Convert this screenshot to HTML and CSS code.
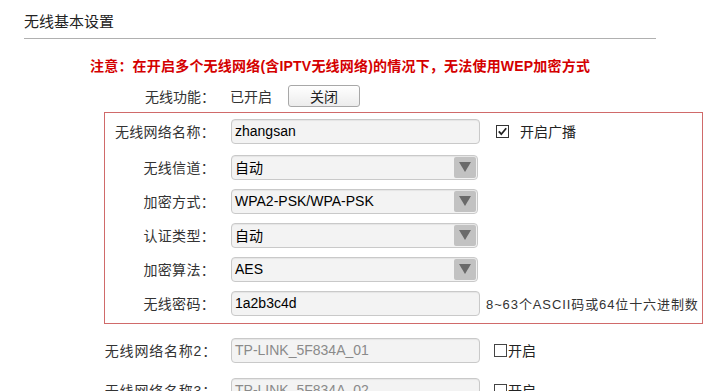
FILE: index.html
```html
<!DOCTYPE html>
<html lang="zh-CN">
<head>
  <meta charset="UTF-8">
  <title>无线基本设置</title>
  <link rel="stylesheet" href="styles.css">
</head>
<body>
  <div class="title">无线基本设置</div>

  <div class="notice">注意：在开启多个无线网络(含IPTV无线网络)的情况下，无法使用WEP加密方式</div>

  <div class="row row-switch">
    <span class="label">无线功能：</span>
    <span class="state">已开启</span>
    <button class="btn">关闭</button>
  </div>

  <div class="box">
    <div class="row first">
      <span class="label">无线网络名称：</span>
      <div class="field">zhangsan</div>
      <span class="check">
        <svg width="13" height="13" viewBox="0 0 13 13">
          <rect x="0.5" y="0.5" width="12" height="12" fill="#fff" stroke="#333"/>
          <path d="M2.8 6.4 L5.3 9.2 L10.2 3.2" fill="none" stroke="#222" stroke-width="1.8"/>
        </svg>
        开启广播
      </span>
    </div>
    <div class="row">
      <span class="label">无线信道：</span>
      <div class="field select"><span>自动</span><span class="arrow"></span></div>
    </div>
    <div class="row">
      <span class="label">加密方式：</span>
      <div class="field select"><span>WPA2-PSK/WPA-PSK</span><span class="arrow"></span></div>
    </div>
    <div class="row">
      <span class="label">认证类型：</span>
      <div class="field select"><span>自动</span><span class="arrow"></span></div>
    </div>
    <div class="row">
      <span class="label">加密算法：</span>
      <div class="field select"><span>AES</span><span class="arrow"></span></div>
    </div>
    <div class="row">
      <span class="label">无线密码：</span>
      <div class="field">1a2b3c4d</div>
      <span class="hint">8~63个ASCII码或64位十六进制数</span>
    </div>
  </div>

  <div class="row row-out">
    <span class="label">无线网络名称2：</span>
    <div class="field disabled">TP-LINK_5F834A_01</div>
    <span class="plain-check"><span class="box-mark"></span>开启</span>
  </div>
  <div class="row row-out">
    <span class="label">无线网络名称3：</span>
    <div class="field disabled">TP-LINK_5F834A_02</div>
    <span class="plain-check"><span class="box-mark"></span>开启</span>
  </div>
</body>
</html>
```

FILE: styles.css
```css
body {
  margin: 0;
  background-color: #fff;
  font-family: "Liberation Sans", "Noto Sans CJK SC", sans-serif;
  font-size: 14px;
  color: #333;
}

.title {
  margin-left: 24px;
  width: 632px;
  padding-top: 12px;
  padding-bottom: 6px;
  line-height: 20px;
  font-size: 15px;
  color: #222;
  border-bottom: 1px solid #b0b0b0;
}

.notice {
  margin-top: 17px;
  margin-left: 90px;
  line-height: 20px;
  font-weight: bold;
  letter-spacing: 0.2px;
  color: #d40000;
}

.row {
  display: flex;
  align-items: center;
  height: 34px;
}

.label {
  width: 112px;
  text-align: right;
  flex-shrink: 0;
}

.row-switch {
  height: 30px;
  margin-top: 5px;
  margin-left: 103px;
}

.state {
  margin-left: 15px;
}

.btn {
  margin-left: 16px;
  width: 72px;
  height: 22px;
  padding: 0;
  font-family: inherit;
  font-size: 14px;
  color: #222;
  background: linear-gradient(#fff, #ececec);
  border: 1px solid #a8a8a8;
  border-radius: 3px;
}

.box {
  margin-top: 1px;
  margin-left: 104px;
  width: 597px;
  padding: 1px 0 3px;
  border: 1px solid #d06a6a;
}

.box .label {
  width: 110px;
  letter-spacing: 0.3px;
}

.box .row.first {
  margin-bottom: 2px;
}

.field {
  margin-left: 16px;
  width: 241px;
  height: 23px;
  padding-left: 3px;
  padding-right: 3px;
  display: flex;
  align-items: center;
  justify-content: space-between;
  background-color: #f3f3f3;
  border: 1px solid #c9c9c9;
  border-radius: 4px;
  box-shadow: inset 0 1px 1px rgba(0,0,0,0.06);
  color: #000;
  flex-shrink: 0;
}

.select {
  padding-right: 1px;
}

.arrow {
  width: 22px;
  height: 21px;
  background-color: #c2c2c2;
  border-radius: 2px;
  display: flex;
  align-items: center;
  justify-content: center;
}

.arrow::after {
  content: "";
  border-left: 6px solid transparent;
  border-right: 6px solid transparent;
  border-top: 10px solid #6a6a6a;
}

.check {
  margin-left: 16px;
  display: flex;
  align-items: center;
  gap: 11px;
  color: #222;
}

.hint {
  margin-left: 6px;
  font-size: 13px;
  letter-spacing: 0.9px;
  color: #333;
  white-space: nowrap;
}

.row-out {
  height: 40px;
  margin-left: 104px;
}

.box + .row-out {
  margin-top: 6px;
}

.row-out .label {
  width: 113px;
  letter-spacing: 0.8px;
}

.row-out .field {
  margin-left: 14px;
}

.disabled {
  color: #8a8a8a;
}

.plain-check {
  margin-left: 14px;
  display: flex;
  align-items: center;
  gap: 1px;
  color: #222;
}

.box-mark {
  width: 11px;
  height: 11px;
  border: 1px solid #444;
}
```
